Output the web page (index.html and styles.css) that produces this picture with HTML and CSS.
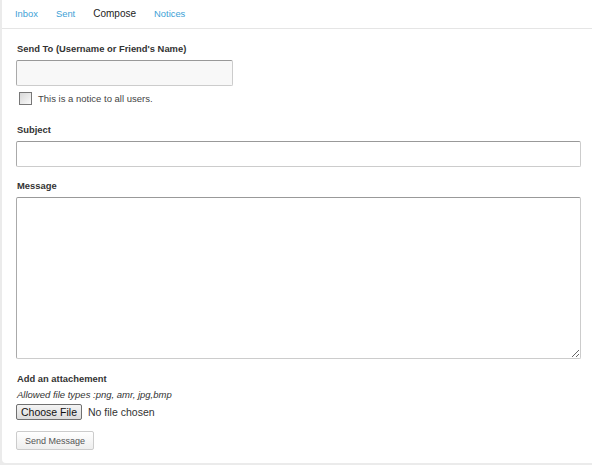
FILE: index.html
```html
<!DOCTYPE html>
<html lang="en">
<head>
	<meta charset="UTF-8">
	<title>Compose</title>
	<link rel="stylesheet" href="styles.css">
</head>
<body>
	<div class="panel">
		<ul class="tabs">
			<li><a href="javascript:;">Inbox</a></li>
			<li><a href="javascript:;">Sent</a></li>
			<li class="on"><a href="javascript:;">Compose</a></li>
			<li><a href="javascript:;">Notices</a></li>
		</ul>
		<form class="compose">
			<label class="label">Send To (Username or Friend's Name)</label>
			<input type="text" class="to" autofocus>
			<label class="notice"><input type="checkbox"> This is a notice to all users.</label>

			<label class="label">Subject</label>
			<input type="text" class="field">

			<label class="label">Message</label>
			<textarea class="field msg"></textarea>

			<label class="label attach">Add an attachement</label>
			<div class="types">Allowed file types :png, amr, jpg,bmp</div>
			<div class="file"><span class="choose">Choose File</span><span class="none">No file chosen</span></div>

			<button type="button" class="send">Send Message</button>
		</form>
	</div>
</body>
</html>
```
FILE: styles.css
```css
	html,body{
		margin:0;
		padding:0;
	}
	body{
		background:#ebebeb;
		font-family:"Liberation Sans",Arial,sans-serif;
		width:592px;
		height:465px;
		overflow:hidden;
	}
	.panel{
		margin-left:2px;
		background:#fff;
		height:463px;
		border-bottom-left-radius:4px;
	}
	.tabs{
		list-style:none;
		margin:0;
		padding:0 0 0 13px;
		height:28px;
		border-bottom:1px solid #e5e5e5;
		display:flex;
		gap:18px;
	}
	.tabs li a{
		display:block;
		padding:8px 0 0;
		font-size:9.4px;
		line-height:12px;
		color:#3d9fd6;
		text-decoration:none;
	}
	.tabs li.on a{
		color:#222;
		font-size:10px;
	}
	.compose{
		display:flex;
		flex-direction:column;
		align-items:flex-start;
		padding:14px 11px 0 14px;
	}
	.label{
		font-size:9.4px;
		font-weight:bold;
		color:#333;
		padding-left:1px;
	}
	.to,.field{
		box-sizing:border-box;
		border:1px solid #ccc;
		border-top-color:#999;
		border-left-color:#aaa;
		border-radius:2px;
		margin:6px 0 0;
		font:inherit;
		outline:none;
	}
	.to{
		width:217px;
		height:26px;
		background:#f8f8f8;
	}
	.field{
		width:565px;
		height:26px;
		background:#fff;
		margin-bottom:13px;
	}
	.msg{
		height:162px;
		resize:both;
		margin-bottom:14px;
	}
	.notice{
		display:flex;
		align-items:center;
		font-size:9.5px;
		color:#444;
		margin:6px 0 19px 3px;
	}
	.notice input{
		-webkit-appearance:none;
		appearance:none;
		box-sizing:border-box;
		margin:0 6px 0 0;
		width:13px;
		height:13px;
		border:1px solid #777;
		background:linear-gradient(135deg,#d8d8d8,#fafafa);
	}
	.types{
		font-size:9.5px;
		font-style:italic;
		color:#333;
		margin-top:5px;
		padding-left:1px;
	}
	.file{
		display:flex;
		align-items:center;
		margin-top:4px;
		font-size:10.5px;
		color:#333;
	}
	.choose{
		border:1px solid #707070;
		border-radius:2px;
		background:linear-gradient(#f4f4f4,#dcdcdc);
		padding:0 4px;
		line-height:14px;
		margin-right:6px;
		color:#111;
	}
	.send{
		margin-top:11px;
		border:1px solid #ccc;
		border-radius:2px;
		background:linear-gradient(#fff,#eee);
		color:#555;
		font:inherit;
		font-size:9px;
		width:78px;
		height:19px;
		padding:0;
	}
```
